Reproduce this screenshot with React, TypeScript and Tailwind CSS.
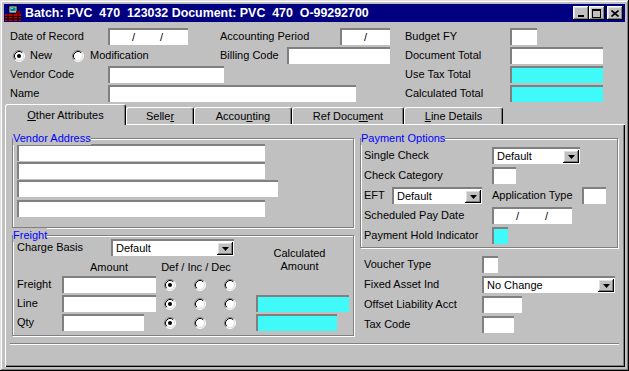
import type { ReactNode } from "react";

const RAISED =
  "bg-[#c0c0c0] shadow-[inset_-1px_-1px_#000,inset_1px_1px_#fff,inset_-2px_-2px_#808080,inset_2px_2px_#dfdfdf]";
const SUNKEN = "border-t-2 border-l-2 border-[#808080]";
const GROOVE = "border border-[#808080] shadow-[inset_1px_1px_#fff,1px_1px_#fff]";

function Field({
  className = "",
  hatch = false,
  children,
}: {
  className?: string;
  hatch?: boolean;
  children?: ReactNode;
}) {
  return (
    <div
      className={`h-[17px] shrink-0 ${SUNKEN} ${hatch ? "bg-[#40fafa]" : "bg-white"} ${className}`}
    >
      {children}
    </div>
  );
}

function DateSlashes({ gap = "gap-[25px]" }: { gap?: string }) {
  return (
    <div className={`h-full flex items-center pl-[22px] ${gap}`}>
      <span>/</span>
      <span>/</span>
    </div>
  );
}

function Combo({ className = "", text }: { className?: string; text: string }) {
  return (
    <div
      className={`h-[17px] shrink-0 ${SUNKEN} bg-white flex items-center justify-between pl-[3px] ${className}`}
    >
      <span>{text}</span>
      <div className={`w-[16px] h-[13px] mr-[1px] flex items-center justify-center ${RAISED}`}>
        <svg width="7" height="4" viewBox="0 0 7 4">
          <path d="M0 0h7L3.5 4z" fill="#000" />
        </svg>
      </div>
    </div>
  );
}

function Radio({ on = false }: { on?: boolean }) {
  return (
    <svg width="12" height="12" viewBox="0 0 12 12" className="shrink-0">
      <circle cx="6" cy="6" r="5" fill="#fff" />
      <path d="M2.11 9.89A5.5 5.5 0 0 1 9.89 2.11" fill="none" stroke="#808080" />
      <path d="M9.89 2.11A5.5 5.5 0 0 1 2.11 9.89" fill="none" stroke="#fff" />
      <path d="M2.82 9.18A4.5 4.5 0 0 1 9.18 2.82" fill="none" stroke="#000" />
      <path d="M9.18 2.82A4.5 4.5 0 0 1 2.82 9.18" fill="none" stroke="#dfdfdf" />
      {on && <circle cx="6" cy="6" r="2" fill="#000" />}
    </svg>
  );
}

function GroupLabel({ children }: { children: ReactNode }) {
  return (
    <span className="absolute left-0 -top-[8px] bg-[#c0c0c0] text-[#0000ff] leading-[14px]">
      {children}
    </span>
  );
}

function AppIcon() {
  return (
    <svg width="16" height="16" viewBox="0 0 16 16" className="ml-[1px] shrink-0">
      <rect x="0" y="9" width="16" height="7" fill="#c00000" />
      <path d="M0 11.5h16M0 14h16M3 9v7M8 9v7M13 9v7" stroke="#000" strokeWidth="1" />
      <rect x="4" y="1" width="8" height="7" fill="#c0c0c0" />
      <rect x="4" y="1" width="8" height="7" fill="none" stroke="#000" strokeWidth="0.8" />
      <rect x="5.5" y="2.5" width="5" height="3.5" fill="#008080" />
      <rect x="6" y="3" width="2" height="1" fill="#00ffff" />
      <rect x="11" y="6" width="4" height="3" fill="#800000" />
    </svg>
  );
}

function Tab({
  active = false,
  className,
  children,
}: {
  active?: boolean;
  className: string;
  children: ReactNode;
}) {
  return (
    <div
      className={`flex items-center justify-center bg-[#c0c0c0] border-t border-l border-white border-r border-r-black rounded-t-[3px] shadow-[inset_-1px_0_#808080] ${
        active ? "relative z-10 -mb-px h-[21px] pt-[1px]" : "h-[17px]"
      } ${className}`}
    >
      {children}
    </div>
  );
}

function FreightRow({
  label,
  fieldW,
  calc,
}: {
  label: string;
  fieldW: string;
  calc?: string;
}) {
  return (
    <div className="h-[17px] flex items-center">
      <span className="w-[45px]">{label}</span>
      <div className="w-[94px]">
        <Field className={fieldW} />
      </div>
      <div className="ml-[8px] flex gap-[18px]">
        <Radio on />
        <Radio />
        <Radio />
      </div>
      {calc && <Field hatch className={`ml-[20px] ${calc}`} />}
    </div>
  );
}

export default function App() {
  return (
    <div className="w-[629px] h-[371px] bg-[#c0c0c0] p-[4px] overflow-hidden flex flex-col shadow-[inset_-1px_-1px_#000,inset_1px_1px_#dfdfdf,inset_-2px_-2px_#808080,inset_2px_2px_#fff] font-['Liberation_Sans',Arial,sans-serif] text-[11px] leading-none text-black">
      {/* Title bar */}
      <div className="h-[18px] shrink-0 bg-[#000080] flex items-center">
        <AppIcon />
        <span className="ml-[4px] text-white font-bold text-[12.4px] whitespace-pre">
          Batch: PVC  470  123032 Document: PVC  470  O-99292700
        </span>
        <div className="ml-auto mr-[2px] flex items-center">
          <div className={`w-[16px] h-[14px] flex items-end justify-center pb-[3px] ${RAISED}`}>
            <div className="w-[6px] h-[2px] bg-black -ml-[1px]" />
          </div>
          <div className={`w-[16px] h-[14px] flex items-center justify-center ${RAISED}`}>
            <div className="w-[9px] h-[9px] border border-black border-t-2 -ml-[1px]" />
          </div>
          <div className={`ml-[2px] w-[16px] h-[14px] flex items-center justify-center ${RAISED}`}>
            <svg width="8" height="7" viewBox="0 0 8 7" className="-ml-[1px]">
              <path d="M0.5 0.5l7 6M7.5 0.5l-7 6" stroke="#000" strokeWidth="1.6" />
            </svg>
          </div>
        </div>
      </div>

      {/* Header form */}
      <div className="mt-[6px] pl-[6px] flex flex-col gap-[2px]">
        <div className="h-[17px] flex items-center">
          <span className="w-[98px]">Date of Record</span>
          <Field className="w-[80px]">
            <DateSlashes />
          </Field>
          <span className="ml-[32px] w-[120px]">Accounting Period</span>
          <Field className="w-[50px]">
            <div className="h-full flex items-center pl-[22px]">/</div>
          </Field>
          <span className="ml-[15px] w-[105px]">Budget FY</span>
          <Field className="w-[27px]" />
        </div>
        <div className="h-[17px] flex items-center">
          <div className="ml-[3px] w-[207px] flex items-center">
            <div className="w-[59px] flex items-center gap-[5px]">
              <Radio on />
              <span>New</span>
            </div>
            <div className="flex items-center gap-[6px]">
              <Radio />
              <span>Modification</span>
            </div>
          </div>
          <span className="w-[67px]">Billing Code</span>
          <Field className="w-[103px]" />
          <span className="ml-[15px] w-[105px]">Document Total</span>
          <Field className="w-[93px]" />
        </div>
        <div className="h-[17px] flex items-center">
          <span className="w-[98px]">Vendor Code</span>
          <Field className="w-[116px]" />
          <span className="ml-[181px] w-[105px]">Use Tax Total</span>
          <Field hatch className="w-[93px]" />
        </div>
        <div className="h-[17px] flex items-center">
          <span className="w-[98px]">Name</span>
          <Field className="w-[248px]" />
          <span className="ml-[49px] w-[105px]">Calculated Total</span>
          <Field hatch className="w-[93px]" />
        </div>
      </div>

      {/* Tabs */}
      <div className="mt-[2px] h-[20px] shrink-0 pl-[1px] flex items-end">
        <Tab active className="w-[121px]">
          <span>
            <u>O</u>ther Attributes
          </span>
        </Tab>
        <Tab className="w-[68px]">
          <span>
            Selle<u>r</u>
          </span>
        </Tab>
        <Tab className="w-[98px]">
          <span>
            Accou<u>n</u>ting
          </span>
        </Tab>
        <Tab className="w-[112px]">
          <span>
            Ref Docu<u>m</u>ent
          </span>
        </Tab>
        <Tab className="w-[99px]">
          <span>
            <u>L</u>ine Details
          </span>
        </Tab>
      </div>

      {/* Tab panel */}
      <div className="ml-[1px] flex-1 flex flex-col border-t border-l border-white shadow-[inset_-1px_-1px_#000,inset_-2px_-2px_#808080]">
        <div className="mt-[13px] ml-[6px] flex items-start">
          {/* Left column */}
          <div className="w-[342px] flex flex-col">
            <div className={`relative h-[90px] ${GROOVE} pl-[4px] pt-[5px]`}>
              <GroupLabel>Vendor Address</GroupLabel>
              <Field className="w-[248px]" />
              <Field className="mt-[1px] w-[248px]" />
              <Field className="mt-[1px] w-[261px]" />
              <Field className="mt-[3px] w-[248px]" />
            </div>

            <div className={`relative mt-[7px] h-[101px] ${GROOVE} pl-[4px] pt-[3px]`}>
              <GroupLabel>Freight</GroupLabel>
              <div className="flex">
                <div className="w-[239px] flex flex-col">
                  <div className="h-[17px] flex items-center">
                    <span className="w-[94px]">Charge Basis</span>
                    <Combo className="w-[123px]" text="Default" />
                  </div>
                  <div className="mt-[4px] h-[14px] flex items-center">
                    <span className="ml-[45px] w-[94px] text-center">Amount</span>
                    <span className="w-[80px] text-center">Def / Inc / Dec</span>
                  </div>
                </div>
                <div className="w-[87px] pt-[8px] text-center leading-[13px]">
                  Calculated
                  <br />
                  Amount
                </div>
              </div>
              <div className="mt-[2px] flex flex-col gap-[2px]">
                <FreightRow label="Freight" fieldW="w-[94px]" />
                <FreightRow label="Line" fieldW="w-[94px]" calc="w-[93px]" />
                <FreightRow label="Qty" fieldW="w-[82px]" calc="w-[81px]" />
              </div>
            </div>
          </div>

          {/* Right column */}
          <div className="ml-[6px] w-[258px] flex flex-col">
            <div className={`relative h-[110px] ${GROOVE} pl-[3px] pt-[8px] flex flex-col gap-[3px]`}>
              <GroupLabel>Payment Options</GroupLabel>
              <div className="h-[17px] flex items-center">
                <span className="w-[128px]">Single Check</span>
                <Combo className="w-[88px]" text="Default" />
              </div>
              <div className="h-[17px] flex items-center">
                <span className="w-[128px]">Check Category</span>
                <Field className="w-[24px]" />
              </div>
              <div className="h-[17px] flex items-center">
                <span className="w-[28px]">EFT</span>
                <Combo className="w-[90px]" text="Default" />
                <span className="ml-[10px] w-[90px]">Application Type</span>
                <Field className="w-[24px]" />
              </div>
              <div className="h-[17px] flex items-center">
                <span className="w-[128px]">Scheduled Pay Date</span>
                <Field className="w-[80px]">
                  <DateSlashes gap="gap-[26px]" />
                </Field>
              </div>
              <div className="h-[17px] flex items-center">
                <span className="w-[128px]">Payment Hold Indicator</span>
                <Field hatch className="w-[16px]" />
              </div>
            </div>

            <div className="mt-[8px] pl-[4px] flex flex-col gap-[3px]">
              <div className="h-[17px] flex items-center">
                <span className="w-[118px]">Voucher Type</span>
                <Field className="w-[16px]" />
              </div>
              <div className="h-[17px] flex items-center">
                <span className="w-[118px]">Fixed Asset Ind</span>
                <Combo className="w-[133px]" text="No Change" />
              </div>
              <div className="h-[17px] flex items-center">
                <span className="w-[118px]">Offset Liability Acct</span>
                <Field className="w-[40px]" />
              </div>
              <div className="h-[17px] flex items-center">
                <span className="w-[118px]">Tax Code</span>
                <Field className="w-[32px]" />
              </div>
            </div>
          </div>
        </div>

        <div className="mt-[7px] ml-[4px] w-[609px] h-[2px] border-t border-[#808080] border-b border-b-white" />
      </div>
    </div>
  );
}
